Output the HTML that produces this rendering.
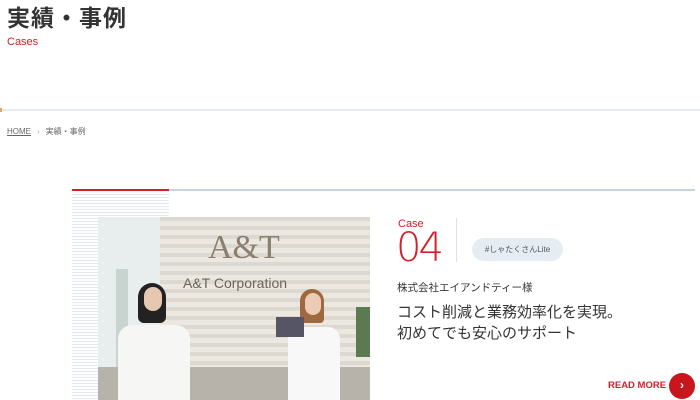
<!DOCTYPE html>
<html><head><meta charset="utf-8"><style>
*{margin:0;padding:0;box-sizing:border-box}
body{width:700px;height:400px;overflow:hidden;background:#fff;font-family:"Liberation Sans","Noto Sans CJK JP",sans-serif;position:relative;color:#333}
.a{position:absolute}
</style></head><body>
<div class="a" style="left:7px;top:3px;font-size:23px;font-weight:bold;color:#333;letter-spacing:1px;line-height:30px">実績・事例</div>
<div class="a" style="left:7px;top:36px;font-size:11px;color:#d0202a;line-height:13px">Cases</div>
<div class="a" style="left:0;top:109px;width:700px;height:2px;background:#e3ecf4"></div>
<div class="a" style="left:0;top:108px;width:2px;height:4px;background:#f0a060"></div>
<div class="a" style="left:7px;top:126px;font-size:8px;color:#666;line-height:11px"><span style="text-decoration:underline">HOME</span><span style="margin:0 6px;color:#aaa">›</span>実績・事例</div>
<div class="a" style="left:72px;top:189px;width:623px;height:2px;background:#c8d2e0"></div>
<div class="a" style="left:72px;top:189px;width:97px;height:2px;background:#d0202a"></div>
<div class="a" style="left:72px;top:192px;width:97px;height:208px;background:repeating-linear-gradient(#fff 0 2px,#e4e8f0 2px 3px)"></div>
<div class="a" style="left:98px;top:217px;width:272px;height:183px;overflow:hidden;background:repeating-linear-gradient(#ddd8d0 0 4px,#ebe7e1 4px 9px)">
<div class="a" style="left:0;top:0;width:62px;height:183px;background:#e8eeee"></div>
<div class="a" style="left:18px;top:52px;width:12px;height:100px;background:#c8d4d0"></div>
<div class="a" style="left:110px;top:12px;font-family:'Liberation Serif',serif;font-size:34px;color:#8a8070">A&amp;T</div>
<div class="a" style="left:85px;top:58px;font-size:14px;color:#6a655c">A&amp;T Corporation</div>
<div class="a" style="left:0;top:150px;width:272px;height:33px;background:#b8b3aa"></div>
<div class="a" style="left:40px;top:66px;width:28px;height:40px;border-radius:14px 14px 6px 6px;background:#222"></div>
<div class="a" style="left:46px;top:70px;width:18px;height:24px;border-radius:9px;background:#e6c8b0"></div>
<div class="a" style="left:20px;top:108px;width:72px;height:75px;border-radius:14px 14px 0 0;background:#f6f6f4"></div>
<div class="a" style="left:202px;top:72px;width:24px;height:34px;border-radius:12px 12px 4px 4px;background:#a06840"></div>
<div class="a" style="left:207px;top:76px;width:16px;height:22px;border-radius:8px;background:#ecccb4"></div>
<div class="a" style="left:190px;top:110px;width:52px;height:73px;border-radius:12px 12px 0 0;background:#f8f8f8"></div>
<div class="a" style="left:178px;top:100px;width:28px;height:20px;background:#556"></div>
<div class="a" style="left:258px;top:90px;width:14px;height:50px;background:#5a7a50"></div>
</div>
<div class="a" style="left:398px;top:218px;font-size:11px;color:#d0202a;line-height:13px">Case</div>
<div class="a" style="left:396px;top:228px;font-family:'DejaVu Sans',sans-serif;font-size:40px;font-weight:200;color:#d0202a;line-height:40px;letter-spacing:-3px">04</div>
<div class="a" style="left:456px;top:218px;width:1px;height:44px;background:#e2e2e2"></div>
<div class="a" style="left:472px;top:238px;width:91px;height:23px;border-radius:12px;background:#e5edf3;font-size:8px;color:#555;text-align:center;line-height:23px">#しゃたくさんLite</div>
<div class="a" style="left:397px;top:281px;font-size:10.5px;color:#333;line-height:14px">株式会社エイアンドティー様</div>
<div class="a" style="left:397px;top:302px;font-size:15px;color:#333;line-height:21px">コスト削減と業務効率化を実現。<br>初めてでも安心のサポート</div>
<div class="a" style="left:608px;top:380px;font-size:9.5px;font-weight:bold;color:#d0202a;line-height:12px">READ MORE</div>
<div class="a" style="left:669px;top:373px;width:26px;height:26px;border-radius:50%;background:#c8161d;color:#fff;font-size:12px;font-weight:bold;text-align:center;line-height:25px">›</div>
</body></html>
